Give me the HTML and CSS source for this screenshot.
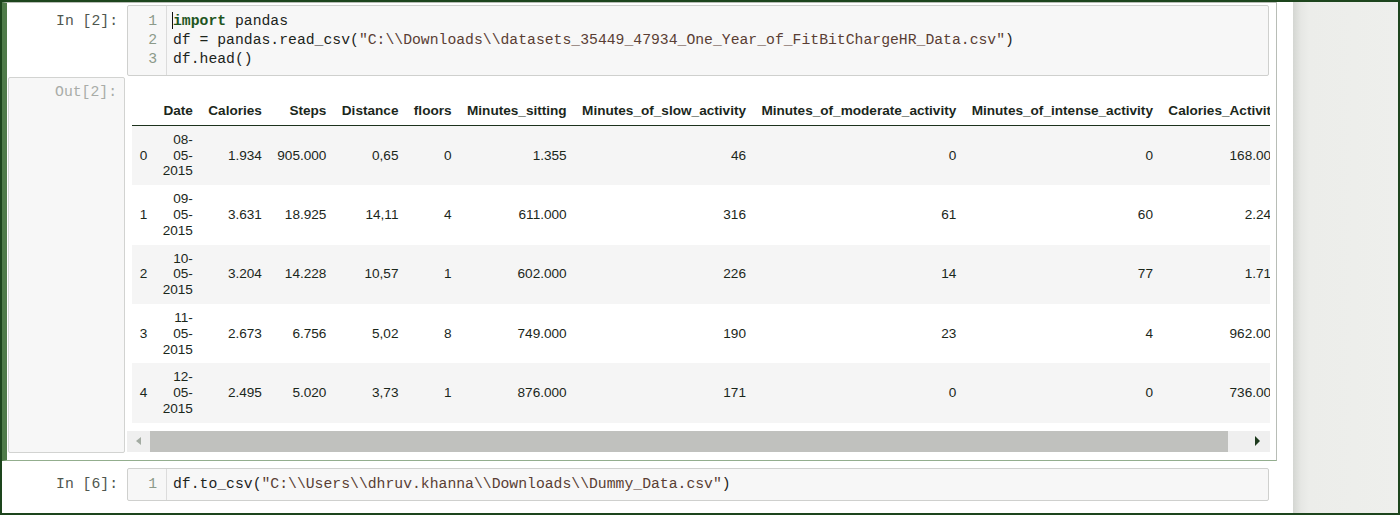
FILE: index.html
```html
<!DOCTYPE html>
<html>
<head>
<meta charset="utf-8">
<title>Notebook</title>
<link rel="stylesheet" href="styles.css">
</head>
<body>
<div class="frame">
  <div class="notebook">
    <div class="cell selected">
      <div class="input">
        <div class="prompt in-prompt">In&nbsp;[2]:</div>
        <div class="editor">
          <div class="gutter"><div>1</div><div>2</div><div>3</div></div>
          <div class="code">
            <div class="line"><span class="cursor"></span><span class="kw">import</span> pandas</div>
            <div class="line">df = pandas.read_csv(<span class="str">"C:\\Downloads\\datasets_35449_47934_One_Year_of_FitBitChargeHR_Data.csv"</span>)</div>
            <div class="line">df.head()</div>
          </div>
        </div>
      </div>
      <div class="output">
        <div class="prompt out-prompt">Out[2]:</div>
        <div class="subarea">
          <div class="scroller">
            <table class="df">
              <thead>
                <tr>
                  <th></th>
                  <th>Date</th>
                  <th>Calories</th>
                  <th>Steps</th>
                  <th>Distance</th>
                  <th>floors</th>
                  <th>Minutes_sitting</th>
                  <th>Minutes_of_slow_activity</th>
                  <th>Minutes_of_moderate_activity</th>
                  <th>Minutes_of_intense_activity</th>
                  <th>Calories_Activity</th>
                </tr>
              </thead>
              <tbody>
                <tr>
                  <td class="idx">0</td><td class="date">08-<br>05-<br>2015</td><td>1.934</td><td>905.000</td><td>0,65</td><td>0</td><td>1.355</td><td>46</td><td>0</td><td>0</td><td>168.000</td>
                </tr>
                <tr>
                  <td class="idx">1</td><td class="date">09-<br>05-<br>2015</td><td>3.631</td><td>18.925</td><td>14,11</td><td>4</td><td>611.000</td><td>316</td><td>61</td><td>60</td><td>2.248</td>
                </tr>
                <tr>
                  <td class="idx">2</td><td class="date">10-<br>05-<br>2015</td><td>3.204</td><td>14.228</td><td>10,57</td><td>1</td><td>602.000</td><td>226</td><td>14</td><td>77</td><td>1.719</td>
                </tr>
                <tr>
                  <td class="idx">3</td><td class="date">11-<br>05-<br>2015</td><td>2.673</td><td>6.756</td><td>5,02</td><td>8</td><td>749.000</td><td>190</td><td>23</td><td>4</td><td>962.000</td>
                </tr>
                <tr>
                  <td class="idx">4</td><td class="date">12-<br>05-<br>2015</td><td>2.495</td><td>5.020</td><td>3,73</td><td>1</td><td>876.000</td><td>171</td><td>0</td><td>0</td><td>736.000</td>
                </tr>
              </tbody>
            </table>
          </div>
          <div class="scrollbar">
            <div class="sb-btn"><span class="arrow-left"></span></div>
            <div class="sb-thumb"></div>
            <div class="sb-rest"><span class="arrow-right"></span></div>
          </div>
        </div>
      </div>
    </div>
    <div class="cell plain">
      <div class="input">
        <div class="prompt in-prompt">In&nbsp;[6]:</div>
        <div class="editor">
          <div class="gutter"><div>1</div></div>
          <div class="code">
            <div class="line">df.to_csv(<span class="str">"C:\\Users\\dhruv.khanna\\Downloads\\Dummy_Data.csv"</span>)</div>
          </div>
        </div>
      </div>
    </div>
  </div>
  <div class="side"></div>
</div>
</body>
</html>
```

FILE: styles.css
```css
* { box-sizing: border-box; }

html, body {
  margin: 0;
  padding: 0;
  background: #ffffff;
}

.frame {
  width: 1400px;
  height: 515px;
  border: 2px solid #1d451d;
  display: flex;
  overflow: hidden;
  background: #ffffff;
}

.notebook {
  width: 1291px;
  flex: none;
  background: #ffffff;
  display: flex;
  flex-direction: column;
}

.side {
  flex: 1;
  background: linear-gradient(to right, #d4d6d2 0px, #e6e7e4 8px, #ecedea 16px, #eeefec 100%);
}

.cell {
  width: 1275px;
  border: 1px solid transparent;
  border-left: 5px solid transparent;
  padding: 2px 6px 7px 0;
}

.cell.selected {
  border-color: #b8bdb6;
  border-bottom-color: #93ae8e;
  border-left-color: #4f7b49;
}

.cell.plain {
  padding-top: 6px;
}

.input {
  display: flex;
}

.prompt {
  width: 120px;
  flex: none;
  text-align: right;
  padding-right: 9px;
  font-family: "Liberation Mono", "DejaVu Sans Mono", monospace;
  font-size: 14.75px;
  line-height: 19px;
}

.in-prompt {
  color: #4f574f;
  padding-top: 7px;
}

.editor {
  flex: 1;
  margin-right: 1px;
  display: flex;
  background: #f7f7f7;
  border: 1px solid #cfd0ce;
  border-radius: 2px;
  padding: 6px 0;
  font-family: "Liberation Mono", "DejaVu Sans Mono", monospace;
  font-size: 14.75px;
  line-height: 19px;
}

.gutter {
  width: 39px;
  flex: none;
  border-right: 1px solid #dcdcdc;
  text-align: right;
  padding-right: 9px;
  color: #8c9a8a;
  margin-top: -6px;
  margin-bottom: -6px;
  padding-top: 6px;
  padding-bottom: 6px;
}

.code {
  padding-left: 6px;
  color: #1c241c;
}

.line {
  height: 19px;
  white-space: pre;
}

.kw {
  font-weight: bold;
  color: #1f561f;
}

.str {
  color: #5a3e34;
}

.cursor {
  display: inline-block;
  width: 0;
  height: 17px;
  border-left: 1px solid #111;
  margin-left: -1px;
  vertical-align: -4px;
}

.output {
  display: flex;
}

.out-prompt {
  width: 117px;
  margin: 1px 2px 0 1px;
  background: #f7f7f7;
  border: 1px solid #d2d3d1;
  border-radius: 2px;
  color: #a9aca8;
  padding-top: 5px;
  padding-right: 7px;
}

.subarea {
  width: 1143px;
  flex: none;
  padding-top: 21px;
  padding-bottom: 1px;
}

.scroller {
  overflow: hidden;
  padding-left: 5px;
}

.df {
  border-collapse: collapse;
  border-spacing: 0;
  font-family: "Liberation Sans", Arial, sans-serif;
  font-size: 13.6px;
  line-height: 15.8px;
  color: #1b271b;
}

.df thead th {
  font-weight: bold;
  text-align: right;
  white-space: nowrap;
  padding: 6px 7.7px;
  border-bottom: 1px solid #1d321d;
  vertical-align: middle;
}

.df td {
  text-align: right;
  white-space: nowrap;
  padding: 6px 7.7px;
  vertical-align: middle;
}

.df td.idx {
  text-align: left;
}

.df tbody tr:nth-child(odd) {
  background: #f5f5f5;
}

.scrollbar {
  margin-top: 8px;
  height: 21px;
  display: flex;
  background: #efefef;
}

.sb-btn {
  width: 23px;
  flex: none;
  display: flex;
  align-items: center;
  justify-content: center;
}

.sb-thumb {
  width: 1078px;
  flex: none;
  background: #c0c1be;
}

.sb-rest {
  flex: 1;
  display: flex;
  align-items: center;
  justify-content: flex-end;
  padding-right: 10px;
}

.arrow-left {
  width: 0;
  height: 0;
  border-top: 4px solid transparent;
  border-bottom: 4px solid transparent;
  border-right: 5px solid #a3aba2;
}

.arrow-right {
  width: 0;
  height: 0;
  border-top: 5px solid transparent;
  border-bottom: 5px solid transparent;
  border-left: 5px solid #1d3a1d;
}
```
